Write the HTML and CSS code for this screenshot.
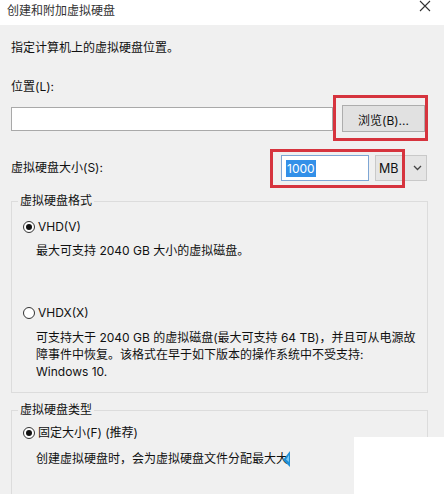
FILE: index.html
```html
<!DOCTYPE html>
<html lang="zh-CN">
<head>
<meta charset="utf-8">
<title>创建和附加虚拟硬盘</title>
<link rel="stylesheet" href="styles.css">
</head>
<body>
<div class="titlebar">
  <span class="title">创建和附加虚拟硬盘</span>
  <svg class="close" width="12" height="12" viewBox="0 0 12 12"><path d="M1 1 L11 11 M11 1 L1 11" stroke="#333" stroke-width="1.1" fill="none"/></svg>
</div>
<div class="main">
  <p class="desc">指定计算机上的虚拟硬盘位置。</p>
  <div class="label-loc">位置(L):</div>
  <div class="loc-row">
    <div class="textbox loc-input"></div>
    <div class="browse-wrap">
      <div class="button">浏览(B)...</div>
    </div>
  </div>
  <div class="size-row">
    <span class="size-label">虚拟硬盘大小(S):</span>
    <div class="size-controls">
      <div class="size-wrap">
        <div class="textbox size-input"><span class="sel">1000</span></div>
      </div>
      <div class="combo">
        <span class="combo-text">MB</span>
        <svg class="chev" width="9" height="6" viewBox="0 0 9 6"><path d="M1 1 L4.5 4.5 L8 1" stroke="#444" stroke-width="1.3" fill="none"/></svg>
      </div>
    </div>
  </div>

  <fieldset class="group g1">
    <legend>虚拟硬盘格式</legend>
    <div class="radio r-vhd"><span class="dot checked"></span>VHD(V)</div>
    <div class="note n-vhd">最大可支持 2040 GB 大小的虚拟磁盘。</div>
    <div class="radio r-vhdx"><span class="dot"></span>VHDX(X)</div>
    <div class="note n-vhdx">可支持大于 2040 GB 的虚拟磁盘(最大可支持 64 TB)，并且可从电源故<br>障事件中恢复。该格式在早于如下版本的操作系统中不受支持:<br>Windows 10.</div>
  </fieldset>

  <fieldset class="group g2">
    <legend>虚拟硬盘类型</legend>
    <div class="radio r-fixed"><span class="dot checked"></span>固定大小(F) (推荐)</div>
    <div class="note n-fixed">创建虚拟硬盘时，会为虚拟硬盘文件分配最大大<svg class="cursor" width="8" height="16" viewBox="0 0 8 16"><path d="M7 0 L7 16 L0 9 Z" fill="#1f8fd6"/><path d="M6 4 L6 11 L3 8.5 Z" fill="#7cc6f0"/></svg></div>
  </fieldset>
</div>
<div class="cover"></div>
</body>
</html>
```
FILE: styles.css
```css
html, body {
  margin: 0;
  padding: 0;
}
body {
  width: 444px;
  height: 494px;
  overflow: hidden;
  background: #f0f0f0;
  font-family: Inter, "Noto Sans CJK SC", sans-serif;
  font-size: 12px;
  color: #111;
  position: relative;
}
.titlebar {
  height: 25px;
  background: #fff;
  display: flex;
  justify-content: space-between;
  align-items: flex-start;
  padding: 0 13px 0 7px;
}
.title {
  line-height: 22px;
  color: #333;
}
.close {
  margin-top: 0;
}
.main {
  padding: 0 16px 0 11px;
}
.desc {
  margin: 14px 0 0;
  line-height: 18px;
}
.label-loc {
  margin-top: 21px;
  line-height: 18px;
}
.loc-row {
  margin-top: 9px;
  height: 27px;
  display: flex;
  align-items: center;
}
.textbox {
  background: #fff;
  border: 1px solid #a9a9a9;
  box-sizing: border-box;
}
.loc-input {
  flex: 1;
  height: 24px;
}
.browse-wrap {
  position: relative;
  margin-left: 9px;
  margin-right: 3px;
}
.browse-wrap::after {
  content: "";
  position: absolute;
  left: -9px;
  top: -10px;
  right: -3px;
  bottom: -9px;
  border: 3px solid #d6343e;
}
.button {
  width: 83px;
  height: 27px;
  box-sizing: border-box;
  background: #e1e1e1;
  border: 1px solid #adadad;
  display: flex;
  align-items: center;
  justify-content: center;
  padding-top: 1px;
}
.size-row {
  margin-top: 23px;
  height: 26px;
  display: flex;
  align-items: center;
  justify-content: space-between;
}
.size-label {
  line-height: 18px;
}
.size-controls {
  display: flex;
  align-items: center;
  margin-right: 1px;
}
.size-wrap {
  position: relative;
}
.size-wrap::after {
  content: "";
  position: absolute;
  left: -11px;
  top: -6px;
  right: -36px;
  bottom: -7px;
  border: 3px solid #d6343e;
  z-index: 2;
}
.size-input {
  width: 88px;
  height: 26px;
  border-color: #7ea6d4;
  display: flex;
  align-items: center;
  padding-left: 4px;
}
.sel {
  background: #3390e8;
  color: #fff;
  line-height: 17px;
  padding: 0 1px;
}
.combo {
  margin-left: 6px;
  width: 52px;
  height: 26px;
  box-sizing: border-box;
  background: #e5e5e5;
  border: 1px solid #c9c9c9;
  display: flex;
  align-items: center;
  justify-content: space-between;
  padding: 0 4px 0 3px;
}
.combo-text {
  font-size: 12.5px;
}
.group {
  margin: 11px 0 0;
  padding: 0 0 12px 11px;
  border: 1px solid #dcdcdc;
  min-width: 0;
}
.group legend {
  margin-left: -5px;
  padding: 0 2px;
  line-height: 18px;
}
.radio {
  display: flex;
  align-items: center;
  line-height: 18px;
}
.dot {
  width: 12px;
  height: 12px;
  box-sizing: border-box;
  border: 1px solid #333;
  border-radius: 50%;
  background: #fff;
  margin-right: 3px;
  position: relative;
  flex: none;
}
.dot.checked::after {
  content: "";
  position: absolute;
  left: 2px;
  top: 2px;
  width: 6px;
  height: 6px;
  border-radius: 50%;
  background: #111;
}
.r-vhd { margin-top: 8px; }
.note {
  margin-left: 13px;
  line-height: 17px;
}
.n-vhd { margin-top: 6px; }
.r-vhdx { margin-top: 45px; }
.n-vhdx { margin-top: 7px; }
.g2 {
  margin-top: 8px;
  padding-bottom: 40px;
}
.r-fixed { margin-top: 5px; }
.n-fixed { margin-top: 8px; }
.cursor {
  vertical-align: -4px;
  margin-left: -5px;
}
.cover {
  position: absolute;
  left: 354px;
  top: 437px;
  right: 0;
  bottom: 0;
  background: #fff;
}
```
